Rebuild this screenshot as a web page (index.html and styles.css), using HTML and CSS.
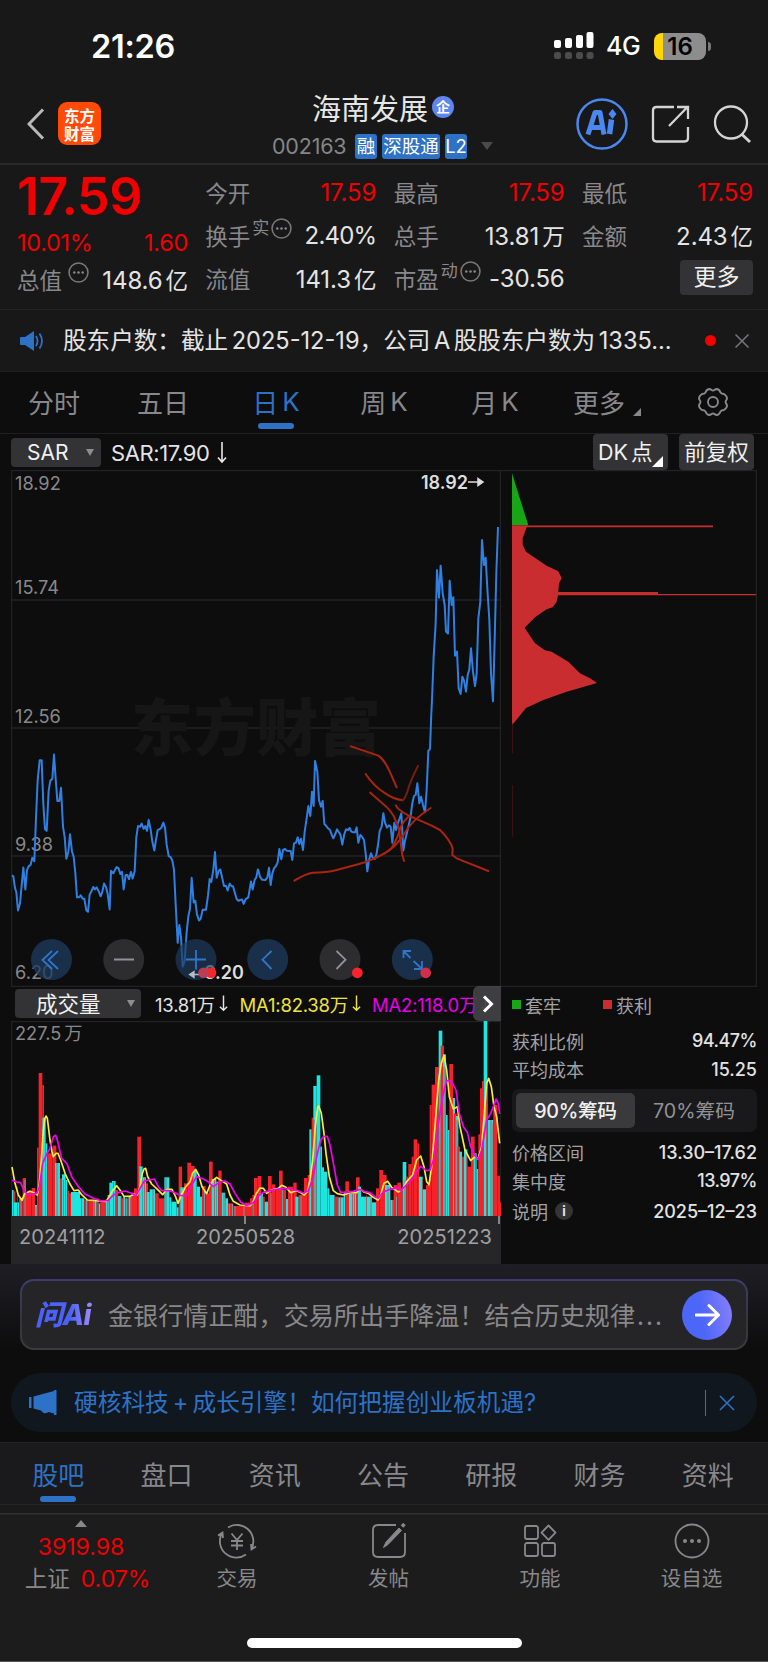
FILE: index.html
```html
<!DOCTYPE html>
<html lang="zh-CN">
<head>
<meta charset="utf-8">
<title>海南发展 002163</title>
<link rel="stylesheet" href="styles.css">
</head>
<body>
<div class="app">
  <div class="status">
    <span class="clock">21:26</span>
    <div class="status-right">
      <svg width="40" height="28" viewBox="0 0 40 28"><g fill="#fff"><rect x="0" y="8" width="7" height="8" rx="2"/><rect x="11" y="6" width="7" height="10" rx="2"/><rect x="22" y="3" width="7" height="13" rx="2"/><rect x="32.500" y="0" width="7" height="16" rx="2"/></g><g fill="#4c4c4c"><rect x="0" y="20" width="7" height="7" rx="2.500"/><rect x="11" y="20" width="7" height="7" rx="2.500"/><rect x="22" y="20" width="7" height="7" rx="2.500"/><rect x="32.500" y="20" width="7" height="7" rx="2.500"/></g></svg>
      <span class="net">4G</span>
      <span class="battery">16</span><i class="battery-tip"></i>
    </div>
  </div>

  <header class="header">
    <svg class="back" width="18" height="32" viewBox="0 0 18 32"><path d="M16 1.500 2 16l14 14.500" fill="none" stroke="#b9b9b9" stroke-width="3"/></svg>
    <div class="logo"><span>东方</span><span>财富</span></div>
    <div class="title">
      <div class="name">海南发展<span class="badge">企</span></div>
      <div class="code"><span>002163</span><b>融</b><b class="tag-wide">深股通</b><b>L2</b><i class="tri"></i></div>
    </div>
    <svg class="acts" width="176" height="54" viewBox="574 97 176 54" fill="none">
      <circle cx="601" cy="124" r="24.500" stroke="#4a87f0" stroke-width="2.500"/>
      <path d="M587 134.500 594 112.500H599L603 134.500M590.500 127.500H600.500" stroke="#4a87f0" stroke-width="5" stroke-linejoin="round"/>
      <path d="M610.500 119.500 608.500 134" stroke="#4a87f0" stroke-width="5.500"/>
      <path d="M611.500 109 615.500 114 611.500 119 607.500 114Z" fill="#4a87f0"/>
      <path d="M673 107H655.500Q652 107 652 110.500V138Q652 141.500 655.500 141.500H683.500Q687 141.500 687 138V127M668 126 686 107.500M676 107H687V119" stroke="#d4d4d4" stroke-width="2.300"/>
      <circle cx="730" cy="122.500" r="16" stroke="#d4d4d4" stroke-width="2.300"/><path d="M740.500 134 749 142" stroke="#d4d4d4" stroke-width="3"/>
    </svg>
  </header>

  <section class="quote">
    <div class="qcol first">
      <div class="price">17.59</div>
      <div class="qrow chg"><span class="red">10.01%</span><span class="red">1.60</span></div>
      <div class="qrow"><label>总值<svg class="more up" viewBox="0 0 20 20"><use href="#dots"/></svg></label><span>148.6<em>亿</em></span></div>
    </div>
    <div class="qcol">
      <div class="qrow"><label>今开</label><span class="red">17.59</span></div>
      <div class="qrow"><label>换手<sup>实</sup><svg class="more" viewBox="0 0 20 20"><use href="#dots"/></svg></label><span class="snug">2.40%</span></div>
      <div class="qrow"><label>流值</label><span>141.3<em>亿</em></span></div>
    </div>
    <div class="qcol">
      <div class="qrow"><label>最高</label><span class="red">17.59</span></div>
      <div class="qrow"><label>总手</label><span>13.81<em>万</em></span></div>
      <div class="qrow"><label>市盈<sup>动</sup><svg class="more" viewBox="0 0 20 20"><use href="#dots"/></svg></label><span>-30.56</span></div>
    </div>
    <div class="qcol">
      <div class="qrow"><label>最低</label><span class="red">17.59</span></div>
      <div class="qrow"><label>金额</label><span>2.43<em>亿</em></span></div>
      <div class="qrow end"><button class="more-btn">更多</button></div>
    </div>
    <svg width="0" height="0" class="defs"><defs><g id="dots"><circle cx="10" cy="10" r="9" fill="none" stroke="#77777c" stroke-width="1.500"/><circle cx="6" cy="10" r="1.200" fill="#88888d"/><circle cx="10" cy="10" r="1.200" fill="#88888d"/><circle cx="14" cy="10" r="1.200" fill="#88888d"/></g></defs></svg>
  </section>

  <section class="notice">
    <svg width="24" height="22" viewBox="0 0 24 22"><path d="M1 7h4l9-6v20l-9-6H1q-1 0-1-1V8q0-1 1-1Z" fill="#2d72c6"/><path d="M16 6q3 5 0 10M19.500 3.500q5 7.500 0 15" fill="none" stroke="#2d72c6" stroke-width="1.800"/></svg>
    <p>股东户数：截止<i></i>2025-12-19，公司<i></i>A<i></i>股股东户数为<i></i>1335...</p>
    <b class="dot"></b>
    <svg width="14" height="14" viewBox="0 0 14 14"><path d="M.5.500 13.500 13.500M13.500.500.500 13.500" stroke="#77777b" stroke-width="1.500"/></svg>
  </section>

  <nav class="period">
    <span>分时</span><span>五日</span><span class="on">日<i></i>K</span><span>周<i></i>K</span><span>月<i></i>K</span><span>更多<svg class="corner" width="8" height="8" viewBox="0 0 8 8"><path d="M8 0V8H0Z" fill="#88888c"/></svg></span>
    <span><svg width="30" height="28" viewBox="-15 -14 30 28" fill="none" stroke="#88888c" stroke-width="1.900" stroke-linejoin="round"><path d="M-4-13Q-2.500-13-1.500-12Q0-11 1.500-12Q2.500-13 4-13Q6.500-12.500 7.500-9.500Q8.500-8 11-8Q14-6 14-3.500Q14-2.500 13-1.500Q12 0 13 1.500Q14 2.500 14 3.500Q14 6 11 8Q8.500 8 7.500 9.500Q6.500 12.500 4 13Q2.500 13 1.500 12Q0 11-1.500 12Q-2.500 13-4 13Q-6.500 12.500-7.500 9.500Q-8.500 8-11 8Q-14 6-14 3.500Q-14 2.500-13 1.500Q-12 0-13-1.500Q-14-2.500-14-3.500Q-14-6-11-8Q-8.500-8-7.500-9.500Q-6.500-12.500-4-13Z"/><circle r="5"/></svg></span>
  </nav>

  <div class="toolbar">
    <button class="sel">SAR<i></i></button>
    <span class="sar">SAR:17.90<svg width="10" height="22" viewBox="0 0 10 22"><path d="M5 0V20M1 15.500 5 20 9 15.500" fill="none" stroke="#e8e8e8" stroke-width="1.600"/></svg></span>
    <button class="dk">DK<i></i>点<svg width="11" height="11" viewBox="0 0 11 11"><path d="M11 0V11H0Z" fill="#fff"/></svg></button>
    <button class="fq">前复权</button>
  </div>

  <main class="main">
    <div class="left">
      <svg class="kline" width="490" height="517" viewBox="11 470 490 517">
        <g stroke="#222224" stroke-width="1.300" fill="none"><path d="M11 470.700H501M11 600H501M11 728H501M11 856H501M11 986.300H501M11.600 470V987M500.500 470V987"/></g>
        <text class="wm" x="131" y="751" textLength="250">东方财富</text>
        <g class="axis"><text x="15" y="490">18.92</text><text x="15" y="593.500">15.74</text><text x="15" y="723">12.56</text><text x="15" y="851">9.38</text><text x="15" y="979">6.20</text></g>
        <g class="mark"><text x="421" y="488.500">18.92</text><text x="204" y="979">6.20</text></g>
        <path d="M468 482H481M478 478.500 483 482 478 485.500Z" stroke="#ddd" stroke-width="1.500" fill="#ddd"/>
        <g fill="none" stroke="#2f80e2" stroke-width="2" stroke-linejoin="round">
          <path vector-effect="non-scaling-stroke" transform="translate(0 460) scale(.33333 .34438)" d="M36 1206 40 1209 45 1243 49 1255 54 1308 60 1288 70 1183 76 1247 81 1190 86 1180 92 1175 97 1155 103 1165 108 1040 113 930 119 872 125 872 130 1000 135 1072 140 1077 146 960 151 931 157 926 162 855 167 925 172 990 178 990 183 952 189 1065 194 1095 199 1158 205 1138 210 1087 216 1137 221 1152 226 1200 231 1270 237 1270 242 1264 248 1274 253 1274 259 1308 264 1312 269 1262 274 1253 280 1240 285 1247 290 1241 296 1252 302 1267 307 1254 312 1230 318 1240 323 1260 329 1305 333 1193 340 1200 345 1190 350 1182 356 1186 361 1202 366 1196 371 1247 377 1205 382 1205 387 1217 393 1196 398 1215 404 1194 409 1095 414 1063 420 1065 425 1056 431 1071 436 1063 441 1077 446 1045 452 1074 457 1108 463 1134 468 1103 473 1075 479 1072 484 1068 490 1053 495 1068 500 1117 506 1150 512 1153 517 1163 522 1190 527 1290 533 1402 538 1350 543 1385 548 1471 554 1455 560 1370 565 1325 570 1303 575 1213 581 1285 586 1280 591 1320 597 1337 602 1332 608 1306 618 1306 624 1265 629 1217 634 1225 640 1190 645 1138 650 1213 656 1193 661 1189 667 1215 672 1237 678 1237 683 1250 689 1230 694 1237 699 1238 704 1255 710 1275 715 1280 726 1276 731 1289 737 1275 745 1270 753 1224 758 1247 764 1219 769 1212 774 1187"/>
          <path vector-effect="non-scaling-stroke" transform="translate(250 700) scale(.33333)" d="M24 507 30 530 36 539 46 540 52 533 57 503 62 555 67 520 72 505 78 498 83 487 88 447 94 478 99 450 105 447 110 452 122 453 127 480 132 430 138 428 143 412 148 432 153 416 159 450 164 395 170 355 175 318 181 348 186 275 191 318 195 183 202 215 207 300 213 320 218 303 223 372 229 378 234 385 240 390 245 404 250 415 256 402 261 388 266 396 271 403 277 434 283 402 288 388 294 390 299 384 304 395 310 397 315 397 320 382 325 428 331 405 336 410 342 420 347 460 352 514 357 480 363 460 368 473 374 477 379 465 384 435 389 393 395 380 400 340 405 368 411 383 417 376 422 380 427 428 433 368 438 390 444 368 449 355 454 340 460 452 465 422 470 402 475 380 481 355 487 310 492 288 497 285 502 250 508 310 513 290 519 315 525 337 530 270 535 152 540 147 544 40 546 0"/>
          <path vector-effect="non-scaling-stroke" transform="translate(400 460) scale(.33333)" d="M96 720 101 590 107 490 111 330 117 413 122 317 128 400 134 435 138 515 144 521 149 362 155 435 160 412 165 587 171 575 176 685 182 702 187 650 192 662 198 695 203 645 208 628 213 565 219 635 225 678 230 640 235 475 241 425 246 240 252 315 257 293 262 385 268 480 273 640 279 724 284 540 289 340 294 201"/>
        </g>
        <g transform="translate(250 700) scale(.33333)" fill="none" stroke="#ab240d" stroke-width="6" stroke-linecap="round" stroke-linejoin="round">
          <path d="M303 139 385 167Q402 178 418 212L440 262M347 222Q370 258 407 281Q430 297 458 301M361 278 397 310Q425 332 437 361Q450 390 449 405L457 465 462 483M438 316Q440 327 475 346L545 377 570 390Q600 420 608 445L607 465 620 475 715 513"/>
          <path d="M133 542Q165 522 187 518Q230 518 260 510L330 491Q370 480 401 462Q435 445 462 403Q485 360 542 324M350 485Q400 466 425 444Q445 410 452 380Q460 365 475 350"/>
          <path d="M458 301Q466 294 472 275 482 240 504 198" stroke="#71200f"/>
        </g>
        <g fill="#1e3b5f" fill-opacity=".75"><circle cx="51.500" cy="959.500" r="20.500"/><circle cx="196" cy="959.500" r="20.500" fill-opacity=".68"/><circle cx="267.700" cy="959.500" r="20.500"/><circle cx="412.300" cy="959.500" r="20.500"/></g>
        <g fill="#2d2d30"><circle cx="123.700" cy="959.500" r="20.500"/><circle cx="340" cy="959.500" r="20.500"/></g>
        <g fill="none" stroke="#2f76cb" stroke-width="1.800"><path d="M52 951 42.500 960 52 969M58 951 48.500 960 58 969M186 959.500H206M196 950V969.500M271.500 951 262.500 959.700 271.500 969M410.500 958 403.500 951M403.500 958V951H411M413.500 961 421.500 968.500M422 961V969H414"/></g>
        <path d="M114 959.500H134M336.500 951 345.500 959.700 336.500 969" fill="none" stroke="#919196" stroke-width="1.800"/>
        <path d="M191 974.500H203M194 971.500 189.500 974.500 194 977.500Z" stroke="#b6bdc8" stroke-width="1.300" fill="#b6bdc8"/>
        <g fill="#f6242b"><circle cx="211" cy="972.800" r="5.300"/><circle cx="203.500" cy="972.800" r="5.300" fill="#b93e55"/><circle cx="357.300" cy="972.800" r="5.400"/><circle cx="425.700" cy="972.800" r="5.400" fill="#cf3045"/></g>
      </svg>

      <div class="volhead">
        <button class="sel vol">成交量<i></i></button>
        <span>13.81万<svg class="dn" viewBox="0 0 10 20"><path d="M5 1V17.500M1 13.500 5 17.500 9 13.500"/></svg></span>
        <span class="ma1">MA1:82.38万<svg class="dn" viewBox="0 0 10 20"><path d="M5 1V17.500M1 13.500 5 17.500 9 13.500"/></svg></span>
        <span class="ma2">MA2:118.0万<svg class="dn" viewBox="0 0 10 20"><path d="M5 1V17.500M1 13.500 5 17.500 9 13.500"/></svg></span>
        <i class="next"><svg width="12" height="18" viewBox="0 0 12 18"><path d="M2 1.500 9.500 9 2 16.500" fill="none" stroke="#fff" stroke-width="3"/></svg></i>
      </div>

      <svg class="volume" width="490" height="195" viewBox="11 1021 490 195">
        <path d="M11 1021.500H501M11.600 1021V1216M500.500 1021V1216" stroke="#222224" stroke-width="1.300" fill="none"/>
        <text class="axis" x="15" y="1039.500">227.5<tspan dx="3">万</tspan></text>
        <g id="bars" transform="translate(0 980) scale(.33333)"></g>
        <g transform="translate(0 980) scale(.33333)" fill="none" stroke-width="5" stroke-linejoin="round">
          <polyline stroke="#fbec3c" points="36,561 45,610 55,645 66,661 74,641 90,634 105,640 112,645 118,610 124,540 130,450 134,417 138,408 142,415 150,480 156,515 160,530 168,520 174,520 182,540 195,580 210,612 222,632 235,630 245,644 262,660 280,661 300,663 318,664 328,650 338,632 350,617 360,630 372,649 390,649 402,643 412,645 420,620 427,580 432,567 437,565 443,590 455,612 470,626 488,644 500,628 516,628 526,648 534,670 544,645 556,622 570,605 578,580 587,568 596,585 606,620 620,641 630,615 640,600 650,592 664,602 680,612 690,645 700,664 720,675 735,676 750,678 758,669 768,642 780,624 790,625 800,640 810,632 822,628 835,625 845,616 858,622 872,638 888,632 900,637 913,645 922,635 930,600 938,540 946,440 953,382 956,378 964,400 972,460 978,520 988,590 1000,632 1012,641 1030,645 1050,638 1070,638 1080,626 1092,636 1105,640 1120,652 1134,660 1142,645 1152,610 1163,604 1175,622 1195,636 1210,625 1220,605 1238,585 1250,540 1262,528 1272,560 1280,605 1287,614 1295,560 1305,440 1316,300 1324,250 1332,226 1340,270 1348,350 1360,387 1372,380 1380,440 1395,510 1412,542 1425,530 1434,537 1445,500 1453,400 1460,310 1466,295 1474,320 1482,380 1490,410 1499,490"/>
          <polyline stroke="#f400f0" points="36,601 50,606 62,608 72,632 84,645 110,640 118,620 128,550 140,522 150,505 160,470 167,466 172,480 185,535 200,550 215,590 235,620 255,642 280,655 305,663 325,661 340,645 355,638 375,633 395,640 408,647 420,625 432,604 445,600 463,597 475,620 485,632 505,632 520,636 540,646 560,648 575,615 590,590 605,595 620,602 640,620 660,606 675,603 690,612 705,640 722,666 738,676 750,673 760,668 775,648 790,637 810,632 830,628 850,625 870,627 890,631 910,639 925,632 940,590 950,530 962,480 972,469 982,469 990,495 1002,560 1012,615 1022,637 1040,637 1060,634 1080,628 1095,635 1110,638 1125,650 1135,654 1150,636 1165,630 1180,626 1192,623 1202,632 1218,616 1235,600 1250,575 1262,559 1280,572 1290,570 1300,540 1315,430 1328,350 1340,302 1355,304 1368,330 1378,400 1390,440 1402,457 1412,500 1425,528 1435,538 1445,510 1460,420 1472,400 1480,380 1488,357 1495,370 1499,402"/>
        </g>
      </svg>
      <div class="dates"><i class="t1"></i><i class="t2"></i><span>20241112</span><span>20250528</span><span>20251223</span></div>
    </div>

    <div class="right">
      <svg class="chips" width="256" height="517" viewBox="501 470 256 517">
        <path d="M501 470.700H756.500V986.300H501" fill="none" stroke="#222224" stroke-width="1.300"/>
        <g transform="translate(400 460) scale(.33333)">
          <path fill="#16a616" d="M336 40 385 196H336Z"/>
          <path fill="#c92d30" d="M336 196H382L368 235V255L378 275 440 317 475 334 485 355 477 370 474 405 470 425 458 442 440 448 405 472 374 503 405 550 435 571 455 575 505 605 540 640 570 655 591 669 500 695 430 720 378 744 336 796ZM380 196.500H939V201.500H380ZM470 396H774V402H1068V406H470Z"/>
          <path d="M338 790V880M338 975V1130" stroke="#4a1618" stroke-width="2.500"/>
        </g>
      </svg>
      <div class="legend"><span class="g">套牢</span><span class="r">获利</span></div>
      <dl><dt>获利比例</dt><dd class="snug">94.47%</dd></dl>
      <dl><dt>平均成本</dt><dd>15.25</dd></dl>
      <div class="seg"><b>90%筹码</b><span>70%筹码</span></div>
      <dl><dt>价格区间</dt><dd>13.30–17.62</dd></dl>
      <dl><dt>集中度</dt><dd class="snug">13.97%</dd></dl>
      <dl class="last"><dt>说明<i>i</i></dt><dd>2025–12–23</dd></dl>
    </div>
  </main>

  <section class="ask">
    <div class="askbox">
      <strong>问Ai</strong>
      <p>金银行情正酣，交易所出手降温！结合历史规律<span>...</span></p>
      <i><svg width="26" height="24" viewBox="0 0 26 24"><path d="M1 12H23M14 2.500 23.500 12 14 21.500" fill="none" stroke="#fff" stroke-width="3" stroke-linecap="round" stroke-linejoin="round"/></svg></i>
    </div>
  </section>

  <section class="promo">
    <svg width="28" height="26" viewBox="0 0 28 26" fill="#2d72c6"><path d="M0 7H2.500V18H0ZM4.500 6.500 25 1V0H27.500V25H25V23.500L19.500 22Q15 25 12 20.500L4.500 18.500Z"/></svg>
    <p>硬核科技<i></i>+<i></i>成长引擎！如何把握创业板机遇?</p>
    <b></b>
    <svg width="16" height="16" viewBox="0 0 16 16"><path d="M1 1 15 15M15 1 1 15" stroke="#2d72c6" stroke-width="1.600"/></svg>
  </section>

  <nav class="tabs"><span class="on">股吧</span><span>盘口</span><span>资讯</span><span>公告</span><span>研报</span><span>财务</span><span>资料</span></nav>

  <footer class="bottom">
    <div class="index"><i></i><span>3919.98</span><p>上证<span>0.07%</span></p></div>
    <div class="act"><svg width="40" height="36" viewBox="-20 -18 40 36"><path d="M-9-13.500A16.500 16.500 0 0 1 14.500 8M9 13.500A16.500 16.500 0 0 1-15-8M-19-5.500-14.500-8.500-14-3M19 5.500 14.500 8.500 14 3M-5.500-7.500 0-1 5.500-7.500M0-1V9M-6 0H6M-6 4.500H6"/></svg>交易</div>
    <div class="act"><svg width="36" height="36" viewBox="-18 -18 36 36"><path d="M7-16H-11Q-16-16-16-11V11Q-16 16-11 16H11Q16 16 16 11V-8"/><path d="M-5.500 6.500-3 1 10-13 12.500-10.500-1 3.500Z" fill="#88888c" stroke-width="1"/><path d="M13-14.500 15.500-17" stroke-width="3.500"/></svg>发帖</div>
    <div class="act"><svg width="36" height="36" viewBox="-18 -18 36 36"><rect x="-15" y="-15" width="13" height="13" rx="2"/><rect x="-15" y="2" width="13" height="13" rx="2"/><rect x="2" y="2" width="13" height="13" rx="2"/><path d="M8.500-15.500 15.500-8.300 8.500-1.200 1.500-8.300Z" stroke-linejoin="round"/></svg>功能</div>
    <div class="act"><svg width="36" height="36" viewBox="-18 -18 36 36"><circle r="16.500"/><g fill="#88888c" stroke="none"><circle cx="-7" r="2"/><circle r="2"/><circle cx="7" r="2"/></g></svg>设自选</div>
    <div class="home"></div>
  </footer>
</div>
<script src="volume.js"></script>
</body>
</html>
```
FILE: volume.js
```js
// Volume bars as "left right top colour"; r = up day, c = down day.
const runs = `36 41 630 c,41 46 634 r,41 57 667 c,57 68 655 r,68 78 594 r,78 84 640 r,84 95 632 r,95 105 624 r,105 111 675 c,111 116 503 r,116 127 279 r,127 132 315 r,127 137 413 c,137 142 490 c,142 158 520 r,158 169 497 r,165 180 549 c,180 191 595 r,186 197 583 c,197 202 600 c,202 208 632 r,208 213 640 r,213 240 636 c,240 253 655 c,253 265 660 r,265 280 662 r,280 290 663 c,290 296 655 r,296 301 670 c,301 318 665 r,318 323 660 c,323 328 645 c,328 336 608 c,336 347 603 c,347 354 630 r,354 364 648 c,364 370 655 r,370 375 650 c,375 386 655 r,386 395 650 c,395 402 640 r,402 412 625 r,412 423 470 r,418 428 559 c,428 438 592 c,438 444 610 r,440 449 636 c,449 465 628 c,465 476 640 r,476 493 655 r,493 508 592 c,508 514 652 c,514 530 665 c,530 536 682 c,536 546 560 r,541 552 622 c,552 562 610 r,562 573 548 r,573 584 558 r,580 590 573 c,590 600 620 c,600 606 650 c,606 617 618 r,617 627 640 r,627 638 545 r,635 649 597 c,649 655 605 c,655 665 572 r,665 676 638 c,676 684 655 c,684 700 670 r,700 735 678 r,735 750 668 r,750 757 655 r,757 762 645 r,762 773 594 r,773 784 588 r,777 789 640 c,789 794 650 r,794 804 665 c,804 815 588 r,815 826 613 r,826 837 630 r,837 848 572 r,848 858 630 r,858 864 657 c,864 880 620 r,880 890 608 r,886 896 650 c,896 912 645 r,912 923 594 r,923 930 585 r,928 935 448 c,935 940 413 r,940 950 318 c,950 961 286 c,961 966 500 c,966 972 562 c,972 982 575 c,982 988 625 c,988 1004 645 c,1004 1015 650 r,1015 1031 652 c,1031 1036 635 c,1036 1047 604 r,1047 1068 640 c,1068 1079 592 r,1074 1083 620 c,1083 1095 650 c,1095 1116 650 c,1116 1128 667 c,1128 1138 625 r,1138 1149 570 r,1149 1160 585 r,1155 1171 615 c,1171 1181 660 c,1181 1192 615 r,1192 1203 608 r,1203 1208 630 r,1208 1219 546 c,1219 1225 590 r,1225 1235 552 r,1235 1241 530 r,1241 1252 478 r,1252 1257 490 r,1257 1268 590 c,1265 1278 628 c,1278 1290 615 r,1289 1295 375 r,1295 1305 314 r,1305 1316 261 r,1316 1327 152 c,1322 1332 197 r,1329 1338 223 c,1338 1343 405 c,1343 1349 450 c,1348 1359 252 r,1359 1365 354 c,1362 1370 400 r,1367 1375 408 c,1372 1380 500 r,1378 1386 515 c,1386 1392 530 r,1392 1402 508 c,1402 1413 560 r,1413 1424 470 r,1421 1430 520 c,1430 1435 567 c,1435 1440 463 r,1440 1446 325 r,1446 1451 303 r,1451 1462 123 c,1460 1464 310 r,1464 1480 420 c,1480 1492 375 r,1492 1500 587 r,1499 1503 667 r`;
const thin = `52 620 r,62 655 c,74 600 c,107 680 r,170 550 r,190 600 r,244 656 r,258 661 c,282 662 r,326 650 r,339 606 r,362 650 r,379 655 c,390 652 r,433 595 r,458 630 r,497 595 r,549 625 r,612 630 c,643 600 r,671 640 r,688 672 c,696 672 c,704 678 c,731 680 c,758 665 c,785 645 r,812 640 c,846 630 c,874 640 c,902 648 c,908 650 r,941 420 r,947 420 r,1020 650 r,1056 640 r,1062 640 r,1098 645 r,1112 650 r,1163 620 r,1177 660 r,1188 650 c,1214 600 r,1266 600 r,1319 300 r,1331 260 r,1336 240 r,1370 420 r,1398 520 r,1425 520 r,1458 330 r,1472 420 r,1478 430 r`;
const fill = { r: '#f6222a', c: '#1de5e0' };
const shapes = runs.split(',').map(s => s.trim().split(' '));
thin.split(',').forEach(s => {
  const [x, top, c] = s.split(' ');
  shapes.push([x, +x + 2, top, c]);
});
document.getElementById('bars').innerHTML = shapes
  .map(([a, b, t, c]) => `<rect x="${a}" y="${t}" width="${b - a}" height="${708 - t}" fill="${fill[c]}"/>`)
  .join('');
```
FILE: styles.css
```css
* { box-sizing: border-box; }
body, p, dl, dd { margin: 0; }
body { background: #0d0d0d; font-family: Inter, "Noto Sans CJK SC", sans-serif; color: #e4e4e4; }
button { border: 0; padding: 0; font: inherit; color: #f0f0f0; background: #333335; }
i, em { font-style: normal; }
svg { display: block; flex: none; }
.app { width: 768px; height: 1662px; overflow: hidden; white-space: nowrap; }
.red { color: #f00000; }

.status { height: 76px; background: #181818; display: flex; padding: 32px 57px 0 91px; justify-content: space-between; }
.clock { font-size: 32.500px; line-height: 29px; font-weight: 600; color: #fff; letter-spacing: -.3px; }
.status-right { display: flex; height: 28px; align-items: center; }
.net { font-size: 25px; line-height: 28px; color: #fff; margin-left: 12px; width: 36px; font-weight: 500; letter-spacing: -.5px; }
.battery { width: 52px; height: 27px; margin-left: 12px; border-radius: 8px; background: linear-gradient(90deg, #ffd60a 9px, #8d8d8d 9px); color: #000; text-align: center; font-size: 24px; font-weight: 600; line-height: 27px; }
.battery-tip { width: 3px; height: 9px; margin-left: 2px; background: #777; border-radius: 0 3px 3px 0; }

.header { height: 89px; background: #181818; border-bottom: 2px solid #29292a; display: flex; padding-left: 27px; }
.back { margin-top: 32px; }
.logo { width: 43px; height: 43px; margin: 26px 0 0 13px; border-radius: 9px; background: #ff4a08; color: #fff; font: 700 15.500px/18px "Noto Sans CJK SC", sans-serif; display: flex; flex-direction: column; align-items: center; justify-content: center; }
.title { width: 450px; margin-left: 24px; padding-left: 147px; }
.name { display: flex; align-items: center; height: 36px; padding-left: 40px; margin-top: 13px; font-size: 29px; color: #e6e6e6; }
.badge { width: 22px; height: 22px; margin-left: 4px; border-radius: 50%; background: #5f86ee; color: #fff; font-size: 14px; line-height: 21px; text-align: center; font-weight: 700; }
.code { display: flex; align-items: center; height: 26px; margin-top: 8px; font-size: 21.500px; color: #85858a; }
.code span { width: 83px; letter-spacing: -.2px; }
.code b { width: 22px; height: 25px; margin-right: 5px; border-radius: 3px; background: #2d72c6; color: #fff; font-size: 18.500px; line-height: 24px; font-weight: 400; text-align: center; }
.code .tag-wide { width: 58px; }
.tri { margin-left: 9px; border: 6px solid transparent; border-top: 8px solid #4a4a4c; border-bottom: 0; }
.acts { margin-top: 21px; }

.quote { height: 145px; background: #181818; border-bottom: 1.500px solid #242425; padding: 5.500px 15px 0 17px; display: flex; justify-content: space-between; }
.defs { position: absolute; }
.qcol { width: 171px; }
.qrow { display: flex; justify-content: space-between; align-items: center; height: 43px; font-size: 24px; letter-spacing: -.1px; }
.qrow label { display: flex; color: #88888d; font-size: 22.500px; align-items: center; letter-spacing: 0; }
.qrow em { font-size: 22.500px; margin-left: 3px; }
.qrow .snug { letter-spacing: -.8px; }
.qrow sup { font-size: 17px; line-height: 20px; margin: -14px 0 0 2px; }
.more { width: 21px; height: 21px; margin: -13px 0 0 2px; }
.more.up { margin-left: 6px; }
.price { height: 57px; line-height: 51px; font-size: 52px; font-weight: 600; color: #f00000; letter-spacing: -.5px; }
.qrow.chg { height: 30px; font-size: 23.500px; letter-spacing: -.3px; }
.end { justify-content: flex-end; }
.more-btn { width: 73px; height: 35px; border-radius: 4px; font-size: 23px; line-height: 34px; letter-spacing: 0; margin-top: -2px; }

.notice { height: 62px; background: #181818; display: flex; align-items: center; padding: 0 19px 0 20px; border-bottom: 1px solid #202021; }
.notice p { margin-left: 19px; width: 642px; font-size: 23.600px; line-height: 30px; }
.notice p i, .promo p i { display: inline-block; width: 4px; }
.notice p i { width: 3.500px; }
.dot { width: 11px; height: 11px; border-radius: 50%; background: #f40000; margin-right: 19px; flex: none; }

.period { height: 62px; display: grid; grid-template-columns: 108px 110px 116px 100px 122px 102px 110px; color: #88888c; font-size: 26px; border-bottom: 1px solid #202022; }
.period span, .tabs span { display: flex; justify-content: center; align-items: center; position: relative; }
.period span { padding-bottom: 2px; }
.period i { width: 4px; }
.period .on, .tabs .on { color: #2d72c6; }
.period .on::after, .tabs .on::after { content: ""; position: absolute; width: 36px; height: 6px; border-radius: 3px; background: #2d72c6; bottom: 4px; }
.corner { margin: 20px 0 0 8px; }

.toolbar { height: 36px; display: flex; padding-left: 11px; align-items: flex-start; }
.sel { width: 90px; height: 29px; margin-top: 4px; border-radius: 4px; font-size: 21px; display: flex; align-items: center; padding-left: 16px; line-height: 28px; }
.sel i { border: 4.500px solid transparent; border-top: 7px solid #8e8e90; border-bottom: 0; margin-left: 18px; }
.sar { display: flex; align-items: center; height: 37px; margin-left: 10px; width: 482px; font-size: 22px; letter-spacing: -.4px; }
.sar svg { margin-left: 7px; }
.dk, .fq { width: 75px; height: 36px; border-radius: 4px; font-size: 21.500px; line-height: 36px; }
.dk { position: relative; text-align: left; padding-left: 5px; }
.dk i { display: inline-block; width: 3px; }
.dk svg { position: absolute; right: 5px; bottom: 3px; }
.fq { margin-left: 11px; }

.main { display: flex; height: 794px; }
.left { width: 490px; margin-left: 11px; flex: none; }
.kline { margin-bottom: -1px; }
.axis { font-size: 18.200px; fill: #88888c; }
.mark { font-size: 18px; font-weight: 600; fill: #dedede; }
.wm { font: 900 62px "Noto Sans CJK SC", sans-serif; fill: #161616; }
.volhead { position: relative; height: 35px; display: flex; align-items: center; font-size: 18.500px; overflow: hidden; letter-spacing: -.2px; }
.vol { width: 126px; margin: 0 14px 0 4px; padding-left: 21px; height: 29px; font-size: 21.500px; letter-spacing: 0; }
.vol i { margin-left: 26px; }
.volhead span { display: flex; align-items: center; width: 84.500px; flex: none; }
.volhead .ma1 { color: #eee23c; width: 132.500px; }
.volhead .ma2 { color: #e800e8; }
.dn { width: 9px; height: 19px; margin-left: 4px; fill: none; stroke: currentColor; stroke-width: 1.600; }
.next { position: absolute; right: 0; top: 0; width: 28px; height: 35px; border-radius: 6px 0 0 6px; background: rgba(72,72,74,.85); padding: 9px 0 0 9px; }
.dates { height: 48px; background: #262628; display: flex; gap: 0; padding: 8px 9px 0 8px; font-size: 20px; line-height: 26px; color: #a0a0a4; position: relative; letter-spacing: .1px; }
.dates span { width: 177px; }
.dates span:last-child { flex: 1; text-align: right; }
.dates i { position: absolute; top: 0; width: 2px; height: 8px; background: #858588; }
.t1 { left: 233px; } .t2 { right: 1px; }

.right { width: 256px; padding-left: 11px; font-size: 18px; }
.chips { margin-left: -11px; }
.legend { height: 36px; padding-bottom: 1px; display: flex; align-items: center; color: #a2a2a4; }
.legend span { width: 91px; display: flex; align-items: center; }
.legend span::before { content: ""; width: 9px; height: 9px; margin-right: 4px; }
.legend .g::before { background: #16a616; } .legend .r::before { background: #c92d30; }
.right dl { height: 28.500px; margin-top: 0; display: flex; justify-content: space-between; align-items: center; color: #a2a2a4; }
.legend + dl { margin-top: 3.500px; }
.right dd { color: #e2e2e2; font-weight: 500; letter-spacing: 0; }
.right dd.snug { letter-spacing: -.5px; }
.seg { height: 43px; margin: 5.500px 0 6px; border-radius: 7px; background: #19191b; display: flex; padding: 4px; font-size: 19.700px; line-height: 36px; text-align: center; }
.seg b { width: 119px; border-radius: 5px; background: #3a3a3c; color: #f0f0f0; font-weight: 500; letter-spacing: -.3px; }
.seg span { flex: 1; color: #929296; }
.right .last { height: 32px; }
.last dt { display: flex; align-items: center; }
.last i { width: 18px; height: 18px; border-radius: 50%; background: #343436; margin-left: 7px; font-size: 13px; line-height: 18px; color: #e4e4e4; text-align: center; font-weight: 700; }

.ask { height: 109px; padding: 15px 20px 0; background: linear-gradient(#1f1e25, #0d0d0d 85px); }
.askbox { height: 71px; display: flex; align-items: center; border-radius: 14px; border: 2px solid transparent; background: linear-gradient(#252527, #252527) padding-box, linear-gradient(#3c3c70, #363638 60%, #3b3b3b) border-box; padding-left: 13px; }
.askbox strong { width: 73px; font-style: italic; font-weight: 800; font-size: 28px; line-height: 34px; letter-spacing: -.5px; background: linear-gradient(90deg, #4a62fa 35px, #a992ff 60px); background-clip: text; -webkit-background-clip: text; color: transparent; }
.askbox p { width: 574px; font: 25.100px/36px "Noto Sans CJK SC", sans-serif; color: #88888b; margin-bottom: 2px; }
.askbox p span { letter-spacing: 2px; margin-left: 2px; }
.askbox i { width: 50px; height: 50px; border-radius: 50%; background: linear-gradient(80deg, #4c66fa 40%, #8a80fa); padding: 13px; }

.promo { height: 59px; margin: 0 11px; border-radius: 30px; background: #10171e; display: flex; align-items: center; padding: 0 22px 0 18px; color: #2d72c6; }
.promo p { margin-left: 17px; width: 631px; font-size: 23.700px; line-height: 32px; }
.promo b { width: 1.500px; height: 26px; background: #2d72c6; margin-right: 13px; }

.tabs { height: 63px; margin-top: 10px; padding: 0 6px 0 4px; background: #1a1a1c; border-top: 1px solid #232325; border-bottom: 1px solid #252527; display: grid; grid-template-columns: repeat(7, 1fr); font-size: 26px; color: #88888c; }
.tabs .on::after { bottom: 2px; }
.bottom { height: 157px; border-top: 8px solid #1a1a1b; background: #1c1c1c; display: grid; grid-template-columns: 162px 150px 153px 150px 153px; align-content: start; color: #88888c; position: relative; box-shadow: inset 0 1.500px #333335; border-bottom: 1px solid #555; }
.act { display: flex; flex-direction: column; align-items: center; font-size: 20.500px; line-height: 28px; padding-top: 10px; gap: 6px; }
.act svg { fill: none; stroke: #88888c; stroke-width: 1.800; }
.index { display: flex; flex-direction: column; align-items: center; font-size: 23px; line-height: 26px; color: #f00000; padding-top: 7px; }
.index > i { border: 6.500px solid transparent; border-bottom: 7px solid #88888c; border-top: 0; margin-bottom: 7px; }
.index p { display: flex; gap: 11px; font-size: 22.500px; line-height: 30px; color: #88888c; margin-top: 4px; padding-left: 13px; }
.index p span { color: #f00000; font-size: 23px; }
.home { position: absolute; left: 247px; top: 125px; width: 275px; height: 10px; border-radius: 5px; background: #fff; }
```
